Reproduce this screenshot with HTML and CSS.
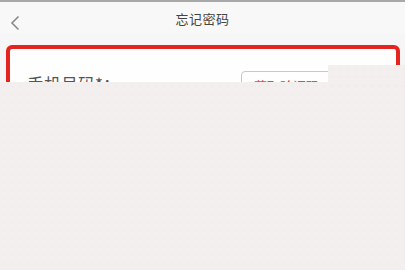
FILE: index.html
```html
<!DOCTYPE html>
<html>
<head>
  <meta charset="utf-8">
  <link rel="stylesheet" href="styles.css">
</head>
<body>
  <div class="screen">
    <div class="topbar">
      <span class="back">
        <svg width="10" height="16" viewBox="0 0 10 16"><path d="M8.5 1.5 L2 8 L8.5 14.5" fill="none" stroke="#8a8a8a" stroke-width="1.6"/></svg>
      </span>
      <div class="title">忘记密码</div>
    </div>

    <div class="content">
      <div class="card">
        <div class="row">
          <div class="label">手机号码*：</div>
          <div class="code-btn">获取验证码</div>
        </div>
      </div>
    </div>

    <div class="cover cover-main"></div>
    <div class="cover cover-side"></div>
  </div>
</body>
</html>
```

FILE: styles.css
```css
body {
  margin: 0;
  font-family: "Noto Sans CJK SC", "Noto Sans", sans-serif;
  background-color: #f3efee;
}

.screen {
  position: relative;
  width: 405px;
  height: 270px;
  overflow: hidden;
  background-color: #f6f6f6;
  border-top: 2px solid #a8a8a8;
  box-sizing: border-box;
}

.topbar {
  position: relative;
  height: 32px;
  display: flex;
  align-items: center;
  justify-content: center;
  background-color: #f8f8f8;
}

.back {
  position: absolute;
  left: 10px;
  top: 10px;
}

.title {
  font-size: 13px;
  color: #444;
  letter-spacing: 0.5px;
}

.content {
  padding: 11px 5px 0 6px;
}

.card {
  border: 4px solid #e5231f;
  border-radius: 6px;
  background-color: #fefefe;
  height: 140px;
  padding: 20px 0 0 17px;
}

.row {
  display: flex;
  align-items: flex-start;
}

.label {
  font-size: 17px;
  color: #555;
  margin-top: 2px;
}

.code-btn {
  border: 1px solid #c8c8c8;
  border-radius: 4px;
  padding: 4px 12px;
  font-size: 13px;
  color: #d8504a;
  width: 90px;
  margin-top: 2px;
  margin-left: auto;
  margin-right: 39px;
}

.cover {
  position: absolute;
  background-color: #f3efee;
  background-image: radial-gradient(circle, #ebe5e4 0.5px, transparent 0.8px);
  background-size: 8px 8px;
}

.cover-main {
  left: 0;
  right: 0;
  top: 80px;
  bottom: 0;
}

.cover-side {
  left: 328px;
  right: 0;
  top: 63px;
  height: 20px;
}
```
